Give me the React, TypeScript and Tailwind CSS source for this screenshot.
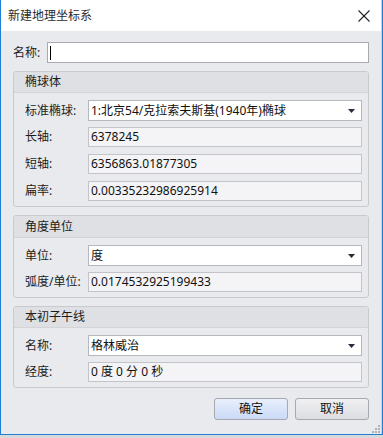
import React from "react";

const font = { fontFamily: '"Noto Sans", "Noto Sans CJK SC", sans-serif' };

function Arrow() {
  return (
    <svg width="7" height="4" viewBox="0 0 7 4" className="mr-[6px]">
      <polygon points="0,0 7,0 3.5,4" fill="#2a2a3c" />
    </svg>
  );
}

function SelectRow({ label, value, mt }: { label: string; value: string; mt: string }) {
  return (
    <div className={`flex items-center h-[21px] ${mt}`}>
      <div className="w-[63px] text-[12px] text-[#1c1c1c] leading-none">{label}</div>
      <div className="w-[274px] h-[21px] bg-white border border-[#b7b8bd] flex items-center justify-between">
        <span className="pl-[2px] text-[12px] text-[#111] leading-none">{value}</span>
        <Arrow />
      </div>
    </div>
  );
}

function InputRow({ label, value, mt }: { label: string; value: React.ReactNode; mt: string }) {
  return (
    <div className={`flex items-center h-[20px] ${mt}`}>
      <div className="w-[63px] text-[12px] text-[#1c1c1c] leading-none">{label}</div>
      <div className="w-[274px] h-[20px] bg-[#f4f4f6] border border-[#c3c4c9] flex items-center">
        <span className="pl-[2px] text-[12px] text-[#111] leading-none">{value}</span>
      </div>
    </div>
  );
}

function Group({ title, children, mt, hh }: { title: string; children: React.ReactNode; mt: string; hh: string }) {
  return (
    <div className={`w-[356px] rounded-[3px] border border-[#c9cacf] overflow-hidden ${mt}`}>
      <div className={`${hh} bg-[#dfe0e4] border-b border-[#d3d4d9] flex items-center pl-[11px] text-[12px] text-[#1c1c1c] leading-none`}>
        {title}
      </div>
      <div className="pl-[11px] pb-[5px]">{children}</div>
    </div>
  );
}

export default function App() {
  return (
    <div className="w-[383px] h-[438px] bg-[#d9d9d9] relative" style={font}>
      <div className="w-[383px] h-[435px] border-l border-r border-b border-[#1f7fd6] flex flex-col">
        <div className="flex-1 flex flex-col border-r border-[#cfd0d4]">
          <div className="h-[31px] bg-white flex items-center justify-between">
            <span className="pl-[7px] text-[12px] text-[#2a2a2a] leading-none">新建地理坐标系</span>
            <svg width="12" height="12" viewBox="0 0 12 12" className="mr-[11px]">
              <line x1="0.5" y1="0.5" x2="11.5" y2="11.5" stroke="#222" strokeWidth="1.1" />
              <line x1="11.5" y1="0.5" x2="0.5" y2="11.5" stroke="#222" strokeWidth="1.1" />
            </svg>
          </div>
          <div className="flex-1 bg-[#e9eaee] pl-[12px] pt-[11px] relative">
            <div className="flex items-center h-[21px]">
              <div className="w-[34px] text-[12px] text-[#1c1c1c] leading-none">名称:</div>
              <div className="w-[322px] h-[21px] bg-white border border-[#a9aaae] flex items-center">
                <div className="ml-[2px] w-px h-[14px] bg-black" />
              </div>
            </div>

            <Group title="椭球体" mt="mt-[8px]" hh="h-[21px]">
              <SelectRow label="标准椭球:" value="1:北京54/克拉索夫斯基(1940年)椭球" mt="mt-[7px]" />
              <InputRow label="长轴:" value="6378245" mt="mt-[6px]" />
              <InputRow label="短轴:" value="6356863.01877305" mt="mt-[7px]" />
              <InputRow label="扁率:" value="0.00335232986925914" mt="mt-[7px]" />
            </Group>

            <Group title="角度单位" mt="mt-[8px]" hh="h-[22px]">
              <SelectRow label="单位:" value="度" mt="mt-[7px]" />
              <InputRow label="弧度/单位:" value="0.0174532925199433" mt="mt-[6px]" />
            </Group>

            <Group title="本初子午线" mt="mt-[8px]" hh="h-[21px]">
              <SelectRow label="名称:" value="格林威治" mt="mt-[7px]" />
              <InputRow label="经度:" value="0 度 0 分 0 秒" mt="mt-[6px]" />
            </Group>

            <div className="w-[356px] flex justify-end gap-[7px] mt-[10px]">
              <button className="w-[74px] h-[22px] rounded-[3px] border border-[#a8a9b0] bg-gradient-to-b from-[#e9effc] to-[#cbdaf7] text-[12px] text-[#111] leading-none">
                确定
              </button>
              <button className="w-[74px] h-[22px] rounded-[3px] border border-[#a8a9b0] bg-gradient-to-b from-[#f0f0f2] to-[#dcdde1] text-[12px] text-[#111] leading-none">
                取消
              </button>
            </div>

            <svg width="8" height="8" viewBox="0 0 8 8" className="absolute right-[1px] bottom-[1px]">
              <rect x="6" y="0" width="2" height="2" fill="#b0b1b6" />
              <rect x="3" y="3" width="2" height="2" fill="#b0b1b6" />
              <rect x="6" y="3" width="2" height="2" fill="#b0b1b6" />
              <rect x="0" y="6" width="2" height="2" fill="#b0b1b6" />
              <rect x="3" y="6" width="2" height="2" fill="#b0b1b6" />
              <rect x="6" y="6" width="2" height="2" fill="#b0b1b6" />
            </svg>
          </div>
        </div>
      </div>
    </div>
  );
}
